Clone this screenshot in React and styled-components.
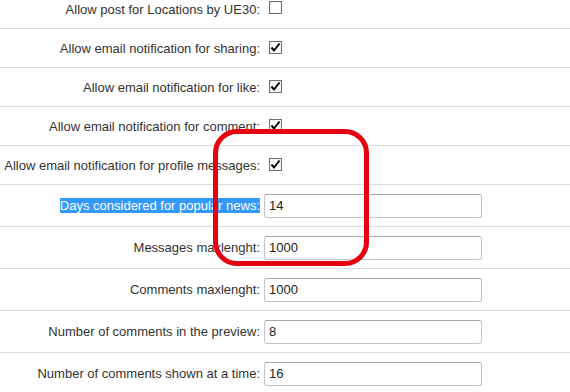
import styled, { createGlobalStyle } from 'styled-components';

const GlobalStyle = createGlobalStyle`
  html, body {
    margin: 0;
    padding: 0;
    background: #fff;
    overflow: hidden;
  }
  body {
    font-family: "Liberation Sans", Arial, sans-serif;
    font-size: 13px;
    color: #333;
  }
`;

const settings = [
  { id: 1, label: 'Allow post for Locations by UE30:', type: 'check', value: false },
  { id: 2, label: 'Allow email notification for sharing:', type: 'check', value: true },
  { id: 3, label: 'Allow email notification for like:', type: 'check', value: true },
  { id: 4, label: 'Allow email notification for comment:', type: 'check', value: true },
  { id: 5, label: 'Allow email notification for profile messages:', type: 'check', value: true },
  { id: 6, label: 'Days considered for popular news:', type: 'text', value: '14', selected: true },
  { id: 7, label: 'Messages maxlenght:', type: 'text', value: '1000' },
  { id: 8, label: 'Comments maxlenght:', type: 'text', value: '1000' },
  { id: 9, label: 'Number of comments in the preview:', type: 'text', value: '8' },
  { id: 10, label: 'Number of comments shown at a time:', type: 'text', value: '16' },
];

const Page = styled.div`
  position: relative;
  width: 570px;
  height: 392px;
  overflow: hidden;
`;

const SettingsList = styled.div`
  margin-top: -10px;
`;

const Row = styled.div`
  display: grid;
  grid-template-columns: 264px 1fr;
  align-items: center;
  height: ${({ $tall }) => ($tall ? '41px' : '38px')};
  border-bottom: 1px solid #dcdcdc;
`;

const Label = styled.div`
  text-align: right;
  padding-right: 4px;
  white-space: nowrap;
  line-height: 15px;
`;

const Selected = styled.span`
  background: #3399ff;
  color: #fff;
`;

const CheckBox = styled.span`
  display: inline-flex;
  align-items: center;
  justify-content: center;
  box-sizing: border-box;
  width: 13px;
  height: 13px;
  margin-left: 5px;
  border: 1px solid #707070;
  background: #fff;
  box-shadow: inset 0 0 0 1px #f4f4f4;
`;

const TextField = styled.div`
  box-sizing: border-box;
  width: 218px;
  height: 24px;
  padding: 3px 0 0 4px;
  border: 1px solid #c4c4c4;
  border-top-color: #a8a8a8;
  border-radius: 3px;
  background: #fff;
  color: #222;
  font-size: 13px;
  line-height: 15px;
`;

const Highlight = styled.div`
  position: absolute;
  left: 213px;
  top: 129px;
  width: 156px;
  height: 137px;
  box-sizing: border-box;
  border: 5px solid #e5000f;
  border-radius: 24px;
  pointer-events: none;
`;

const Check = () => (
  <svg width="11" height="11" viewBox="0 0 11 11">
    <path d="M1.5 5.5 L4 8.5 L9.5 1.5" fill="none" stroke="#000" strokeWidth="2" />
  </svg>
);

export default function App() {
  return (
    <Page>
      <GlobalStyle />
      <SettingsList>
        {settings.map(({ id, label, type, value, selected }) => (
          <Row key={id} $tall={type === 'text'}>
            <Label>{selected ? <Selected>{label}</Selected> : label}</Label>
            <div>
              {type === 'check' ? (
                <CheckBox>{value && <Check />}</CheckBox>
              ) : (
                <TextField>{value}</TextField>
              )}
            </div>
          </Row>
        ))}
      </SettingsList>
      <Highlight />
    </Page>
  );
}
